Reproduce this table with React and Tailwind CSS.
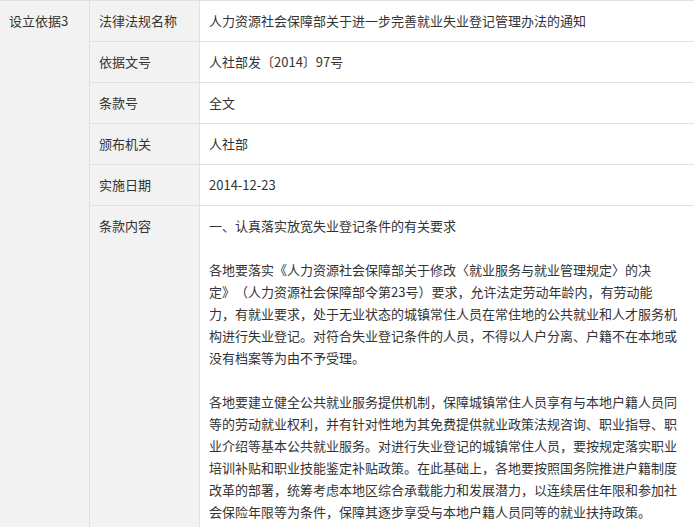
import React from "react";

const rows = [
  ["法律法规名称", "人力资源社会保障部关于进一步完善就业失业登记管理办法的通知"],
  ["依据文号", "人社部发〔2014〕97号"],
  ["条款号", "全文"],
  ["颁布机关", "人社部"],
  ["实施日期", "2014-12-23"],
];

const p1 = [
  "各地要落实《人力资源社会保障部关于修改〈就业服务与就业管理规定〉的决",
  "定》（人力资源社会保障部令第23号）要求，允许法定劳动年龄内，有劳动能",
  "力，有就业要求，处于无业状态的城镇常住人员在常住地的公共就业和人才服务机",
  "构进行失业登记。对符合失业登记条件的人员，不得以人户分离、户籍不在本地或",
  "没有档案等为由不予受理。",
];

const p2 = [
  "各地要建立健全公共就业服务提供机制，保障城镇常住人员享有与本地户籍人员同",
  "等的劳动就业权利，并有针对性地为其免费提供就业政策法规咨询、职业指导、职",
  "业介绍等基本公共就业服务。对进行失业登记的城镇常住人员，要按规定落实职业",
  "培训补贴和职业技能鉴定补贴政策。在此基础上，各地要按照国务院推进户籍制度",
  "改革的部署，统筹考虑本地区综合承载能力和发展潜力，以连续居住年限和参加社",
  "会保险年限等为条件，保障其逐步享受与本地户籍人员同等的就业扶持政策。",
];

function Lines({ lines }) {
  return (
    <div>
      {lines.map((l, i) => (
        <div key={i} className="whitespace-nowrap">{l}</div>
      ))}
    </div>
  );
}

export default function App() {
  return (
    <div className="w-[694px] flex border-t border-[#e0e0e0] bg-white text-[13px] leading-[22px] text-[#333] [text-spacing-trim:space-all] font-['Noto_Sans_CJK_SC',sans-serif]">
      <div className="w-[90px] shrink-0 bg-[#f2f2f2] border-r border-[#e0e0e0] px-[9px] py-[9px]">
        设立依据3
      </div>
      <div className="flex-1 flex flex-col">
        {rows.map(([k, v]) => (
          <div key={k} className="flex border-b border-[#e0e0e0]">
            <div className="w-[110px] shrink-0 bg-[#f2f2f2] border-r border-[#e0e0e0] px-[9px] py-[9px]">
              {k}
            </div>
            <div className="flex-1 px-[9px] py-[9px]">{v}</div>
          </div>
        ))}
        <div className="flex">
          <div className="w-[110px] shrink-0 bg-[#f2f2f2] border-r border-[#e0e0e0] px-[9px] py-[9px]">
            条款内容
          </div>
          <div className="flex-1 px-[9px] py-[9px]">
            <div>一、认真落实放宽失业登记条件的有关要求</div>
            <div className="h-[22px]"></div>
            <Lines lines={p1} />
            <div className="h-[22px]"></div>
            <Lines lines={p2} />
          </div>
        </div>
      </div>
    </div>
  );
}
